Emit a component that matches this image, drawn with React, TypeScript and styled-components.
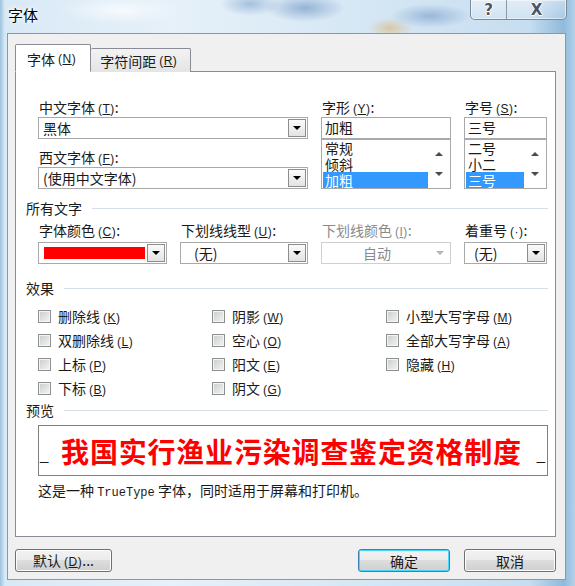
import React from 'react'
import styled, { createGlobalStyle } from 'styled-components'

const GlobalStyle = createGlobalStyle`
  html, body {
    margin: 0;
    padding: 0;
  }
  body {
    width: 575px;
    height: 586px;
    overflow: hidden;
    font-family: "Noto Sans CJK SC", "Noto Sans", sans-serif;
    font-size: 14px;
    color: #1a1a1a;
  }
`

const Key = ({ k }: { k: string }) => (
  <S.Key>
    (<u>{k}</u>)
  </S.Key>
)

type ComboProps = {
  children?: React.ReactNode
  indent?: number
  disabled?: boolean
  center?: boolean
}

function Combo({ children, indent = 3, disabled, center }: ComboProps) {
  return (
    <S.Combo $disabled={disabled}>
      <S.ComboText $indent={indent} $disabled={disabled} $center={center}>
        {children}
      </S.ComboText>
      <S.DropButton $disabled={disabled} />
    </S.Combo>
  )
}

function ListBox({ items, selected }: { items: string[]; selected: number }) {
  return (
    <S.ListBox>
      <S.ListItems>
        {items.map((it, i) => (
          <S.ListItem key={it} $selected={i === selected}>
            {it}
          </S.ListItem>
        ))}
      </S.ListItems>
      <S.ScrollBar>
        <S.Arrow $up />
        <S.Arrow />
      </S.ScrollBar>
    </S.ListBox>
  )
}

function Check({ label, k }: { label: string; k: string }) {
  return (
    <S.CheckRow>
      <S.Box />
      <span>
        {label}
        <Key k={k} />
      </span>
    </S.CheckRow>
  )
}

const effects = [
  ['删除线', 'K'],
  ['阴影', 'W'],
  ['小型大写字母', 'M'],
  ['双删除线', 'L'],
  ['空心', 'O'],
  ['全部大写字母', 'A'],
  ['上标', 'P'],
  ['阳文', 'E'],
  ['隐藏', 'H'],
  ['下标', 'B'],
  ['阴文', 'G'],
]

export default function App() {
  return (
    <>
      <GlobalStyle />
      <S.Window>
        <S.TitleBar>
          <S.Title>字体</S.Title>
          <S.CaptionButtons>
            <S.CaptionButton $w={35}>?</S.CaptionButton>
            <S.CaptionButton $w={59}>X</S.CaptionButton>
          </S.CaptionButtons>
        </S.TitleBar>

        <S.Client>
          <S.Tabs>
            <S.Tab $active>
              字体<Key k="N" />
            </S.Tab>
            <S.Tab>
              字符间距<Key k="R" />
            </S.Tab>
          </S.Tabs>

          <S.Panel>
            <S.FontGrid>
              <S.Field $wide>
                <S.Label>
                  中文字体<Key k="T" />:
                </S.Label>
                <Combo>黑体</Combo>
                <S.Label $gap={10}>
                  西文字体<Key k="F" />:
                </S.Label>
                <Combo>(使用中文字体)</Combo>
              </S.Field>
              <S.Field>
                <S.Label>
                  字形<Key k="Y" />:
                </S.Label>
                <S.TextInput>加粗</S.TextInput>
                <ListBox items={['常规', '倾斜', '加粗']} selected={2} />
              </S.Field>
              <S.Field>
                <S.Label>
                  字号<Key k="S" />:
                </S.Label>
                <S.TextInput>三号</S.TextInput>
                <ListBox items={['二号', '小二', '三号']} selected={2} />
              </S.Field>
            </S.FontGrid>

            <S.Heading $gap={11}>所有文字</S.Heading>
            <S.AllTextGrid>
              <S.Field>
                <S.Label $tight>
                  字体颜色<Key k="C" />:
                </S.Label>
                <S.Combo>
                  <S.Swatch />
                  <S.DropButton />
                </S.Combo>
              </S.Field>
              <S.Field>
                <S.Label $tight>
                  下划线线型<Key k="U" />:
                </S.Label>
                <Combo indent={12}>(无)</Combo>
              </S.Field>
              <S.Field>
                <S.Label $tight $disabled>
                  下划线颜色<Key k="I" />:
                </S.Label>
                <Combo disabled center>
                  自动
                </Combo>
              </S.Field>
              <S.Field>
                <S.Label $tight>
                  着重号<S.Key>(·)</S.Key>:
                </S.Label>
                <Combo indent={8}>(无)</Combo>
              </S.Field>
            </S.AllTextGrid>

            <S.Heading $gap={16}>效果</S.Heading>
            <S.CheckGrid>
              {effects.map(([label, k]) => (
                <Check key={label} label={label} k={k} />
              ))}
            </S.CheckGrid>

            <S.Heading $gap={2}>预览</S.Heading>
            <S.Preview>
              <S.Caret>_</S.Caret>
              <S.PreviewText>我国实行渔业污染调查鉴定资格制度</S.PreviewText>
              <S.Caret>_</S.Caret>
            </S.Preview>
            <S.Note>
              这是一种 <S.Mono>TrueType</S.Mono> 字体，同时适用于屏幕和打印机。
            </S.Note>
          </S.Panel>

          <S.ButtonRow>
            <S.Button $w={97}>
              默认<Key k="D" />...
            </S.Button>
            <S.Spacer />
            <S.Button $w={92} $default>
              确定
            </S.Button>
            <S.Button $w={92}>取消</S.Button>
          </S.ButtonRow>
        </S.Client>
      </S.Window>
    </>
  )
}

const S = {
  Window: styled.div`
    width: 575px;
    height: 586px;
    box-sizing: border-box;
    padding: 0 9px 6px 7px;
    display: flex;
    flex-direction: column;
    background:
      radial-gradient(ellipse 30px 12px at 250px 4px, rgba(96, 140, 190, 0.45), transparent),
      radial-gradient(ellipse 40px 14px at 305px 8px, rgba(80, 125, 180, 0.5), transparent),
      radial-gradient(ellipse 22px 10px at 390px 28px, rgba(222, 176, 100, 0.55), transparent),
      radial-gradient(ellipse 40px 12px at 430px 16px, rgba(90, 130, 185, 0.45), transparent),
      radial-gradient(ellipse 60px 14px at 120px 10px, rgba(255, 255, 255, 0.7), transparent),
      linear-gradient(90deg, #9cc2df 0px, #d8e9f6 5px, #e6f1f9 30%, #d7e8f5 60%, #c7def0 92%, #8fbadc 98%, #b4d2ea 100%);
  `,

  TitleBar: styled.div`
    height: 33px;
    display: flex;
    justify-content: space-between;
    align-items: flex-start;
  `,

  Title: styled.div`
    margin: 6px 0 0 1px;
    font-size: 15px;
    line-height: 18px;
    color: #000;
    text-shadow: 0 0 6px #fff, 0 0 4px #fff, 0 0 2px #fff;
  `,

  CaptionButtons: styled.div`
    display: flex;
    height: 19px;
    margin-right: -1px;
    border: 1px solid #7d8a98;
    border-top: none;
    border-radius: 0 0 5px 5px;
    background: linear-gradient(rgba(255, 255, 255, 0.45), rgba(220, 235, 248, 0.35));
    box-shadow: inset 0 0 0 1px rgba(255, 255, 255, 0.5);
    overflow: hidden;
  `,

  CaptionButton: styled.div<{ $w: number }>`
    width: ${p => p.$w}px;
    display: flex;
    align-items: center;
    justify-content: center;
    font-family: "DejaVu Sans", sans-serif;
    font-weight: bold;
    font-size: 15px;
    color: #4a5664;
    text-shadow: 0 0 1px #fff, 1px 0 0 #fff, -1px 0 0 #fff, 0 1px 0 #fff, 0 -1px 0 #fff;
    & + & {
      border-left: 1px solid #8c98a6;
    }
  `,

  Client: styled.div`
    flex: 1;
    display: flex;
    flex-direction: column;
    box-sizing: border-box;
    border: 1px solid #8b97a3;
    background: #f0f0f0;
    padding: 10px 9px 6px 7px;
  `,

  Tabs: styled.div`
    display: flex;
    align-items: flex-end;
    height: 28px;
    margin-bottom: -1px;
    position: relative;
    z-index: 1;
  `,

  Tab: styled.div<{ $active?: boolean }>`
    box-sizing: border-box;
    height: ${p => (p.$active ? 28 : 24)}px;
    padding: ${p => (p.$active ? '0 14px 0 11px' : '0 13px 0 9px')};
    display: flex;
    align-items: center;
    padding-top: ${p => (p.$active ? 2 : 1)}px;
    border: 1px solid #898c95;
    border-bottom: ${p => (p.$active ? '1px solid #fff' : 'none')};
    border-radius: 2px 2px 0 0;
    background: ${p => (p.$active ? '#fff' : 'linear-gradient(#f3f3f3, #e4e4e4)')};
    & + & {
      border-left: none;
    }
  `,

  Key: styled.span`
    font-family: "Liberation Sans", "Noto Sans", sans-serif;
    font-size: 12px;
    margin-left: 3px;
    letter-spacing: 0.5px;
  `,

  Panel: styled.div`
    height: 466px;
    box-sizing: border-box;
    border: 1px solid #898c95;
    background: #fff;
    padding: 0 7px 0 10px;
    display: flex;
    flex-direction: column;
  `,

  FontGrid: styled.div`
    display: grid;
    grid-template-columns: 129px 128px 130px 83px;
    column-gap: 13px;
    margin: 27px 0 0 12px;
  `,

  AllTextGrid: styled.div`
    display: grid;
    grid-template-columns: 129px 128px 130px 83px;
    column-gap: 13px;
    margin: 6px 0 0 12px;
  `,

  Field: styled.div<{ $wide?: boolean }>`
    display: flex;
    flex-direction: column;
    grid-column: ${p => (p.$wide ? 'span 2' : 'auto')};
  `,

  Label: styled.div<{ $gap?: number; $tight?: boolean; $disabled?: boolean }>`
    height: 16px;
    line-height: 16px;
    margin: ${p => p.$gap ?? 0}px 0 ${p => (p.$tight ? 4 : 2)}px 1px;
    white-space: nowrap;
    color: ${p => (p.$disabled ? '#8a8a8a' : '#1a1a1a')};
  `,

  Combo: styled.div<{ $disabled?: boolean }>`
    height: 22px;
    box-sizing: border-box;
    display: flex;
    border: 1px solid ${p => (p.$disabled ? '#cfcfcf' : '#a9a9a9')};
    background: #fff;
    padding: 1px;
  `,

  ComboText: styled.div<{ $indent: number; $disabled?: boolean; $center?: boolean }>`
    flex: 1;
    display: flex;
    align-items: center;
    justify-content: ${p => (p.$center ? 'center' : 'flex-start')};
    padding-left: ${p => (p.$center ? 0 : p.$indent)}px;
    color: ${p => (p.$disabled ? '#8a8a8a' : '#1a1a1a')};
    white-space: nowrap;
    line-height: 18px;
  `,

  Swatch: styled.div`
    flex: 1;
    margin: 3px 2px 3px 4px;
    background: #ff0000;
  `,

  DropButton: styled.div<{ $disabled?: boolean }>`
    width: 18px;
    box-sizing: border-box;
    display: flex;
    align-items: center;
    justify-content: center;
    border: 1px solid ${p => (p.$disabled ? 'transparent' : '#8d8d8d')};
    background: ${p => (p.$disabled ? '#fff' : 'linear-gradient(#fbfbfb, #e3e3e3)')};
    &::after {
      content: '';
      border-left: 4px solid transparent;
      border-right: 4px solid transparent;
      border-top: 4px solid ${p => (p.$disabled ? '#b4b4b4' : '#000')};
    }
  `,

  TextInput: styled.div`
    height: 22px;
    box-sizing: border-box;
    border: 1px solid #a9a9a9;
    padding-left: 3px;
    line-height: 19px;
  `,

  ListBox: styled.div`
    height: 50px;
    box-sizing: border-box;
    border: 1px solid #a9a9a9;
    display: flex;
    overflow: hidden;
  `,

  ListItems: styled.div`
    flex: 1;
    padding: 0 0 0 1px;
    overflow: hidden;
  `,

  ListItem: styled.div<{ $selected?: boolean }>`
    height: 16px;
    line-height: 16px;
    padding-left: 2px;
    white-space: nowrap;
    background: ${p => (p.$selected ? '#3399ff' : 'transparent')};
    color: ${p => (p.$selected ? '#fff' : '#1a1a1a')};
  `,

  ScrollBar: styled.div`
    width: 22px;
    display: flex;
    flex-direction: column;
    justify-content: space-between;
    align-items: center;
    padding: 12px 0;
    box-sizing: border-box;
  `,

  Arrow: styled.div<{ $up?: boolean }>`
    width: 0;
    height: 0;
    border-left: 4px solid transparent;
    border-right: 4px solid transparent;
    ${p => (p.$up ? 'border-bottom: 4px solid #4a4a4a;' : 'border-top: 4px solid #4a4a4a;')}
  `,

  Heading: styled.div<{ $gap: number }>`
    margin-top: ${p => p.$gap}px;
    height: 16px;
    line-height: 16px;
    display: flex;
    align-items: center;
    gap: 10px;
    &::after {
      content: '';
      flex: 1;
      height: 1px;
      background: #d5dfe5;
    }
  `,

  CheckGrid: styled.div`
    display: grid;
    grid-template-columns: 174px 174px 1fr;
    grid-auto-rows: 24px;
    margin: 8px 0 0 12px;
  `,

  CheckRow: styled.div`
    display: flex;
    align-items: center;
    gap: 7px;
    white-space: nowrap;
  `,

  Box: styled.span`
    width: 13px;
    height: 13px;
    box-sizing: border-box;
    border: 1px solid #8e8f8f;
    background: linear-gradient(135deg, #c9ccd0, #f4f4f4);
    box-shadow: inset 0 0 0 1px #f4f4f4;
  `,

  Preview: styled.div`
    margin: 7px 0 0 12px;
    height: 51px;
    box-sizing: border-box;
    border: 1px solid #808080;
    display: flex;
    align-items: center;
    justify-content: space-between;
    padding: 0 2px 0 1px;
  `,

  Caret: styled.span`
    font-family: "Liberation Sans", sans-serif;
    font-size: 15px;
    line-height: 15px;
    margin-top: 8px;
  `,

  PreviewText: styled.span`
    font-size: 28px;
    font-weight: bold;
    color: #ff0000;
    letter-spacing: 0.8px;
    line-height: 34px;
    margin-right: 2px;
  `,

  Note: styled.div`
    margin: 6px 0 0 12px;
    height: 16px;
    line-height: 16px;
    white-space: nowrap;
  `,

  Mono: styled.span`
    font-family: "Liberation Mono", monospace;
    font-size: 12px;
  `,

  ButtonRow: styled.div`
    display: flex;
    gap: 14px;
    margin-top: 12px;
  `,

  Spacer: styled.div`
    flex: 1;
  `,

  Button: styled.button<{ $w: number; $default?: boolean }>`
    width: ${p => p.$w}px;
    height: 23px;
    padding: 0;
    border-radius: 3px;
    border: 1px solid ${p => (p.$default ? '#3c7fb1' : '#707070')};
    background: linear-gradient(#f2f2f2 0%, #ebebeb 49%, #dddddd 50%, #cfcfcf 100%);
    box-shadow: inset 0 0 0 1px ${p => (p.$default ? '#48d6fb' : '#fcfcfc')};
    font-family: "Noto Sans CJK SC", sans-serif;
    font-size: 14px;
    color: #1a1a1a;
    line-height: 20px;
  `,
}
